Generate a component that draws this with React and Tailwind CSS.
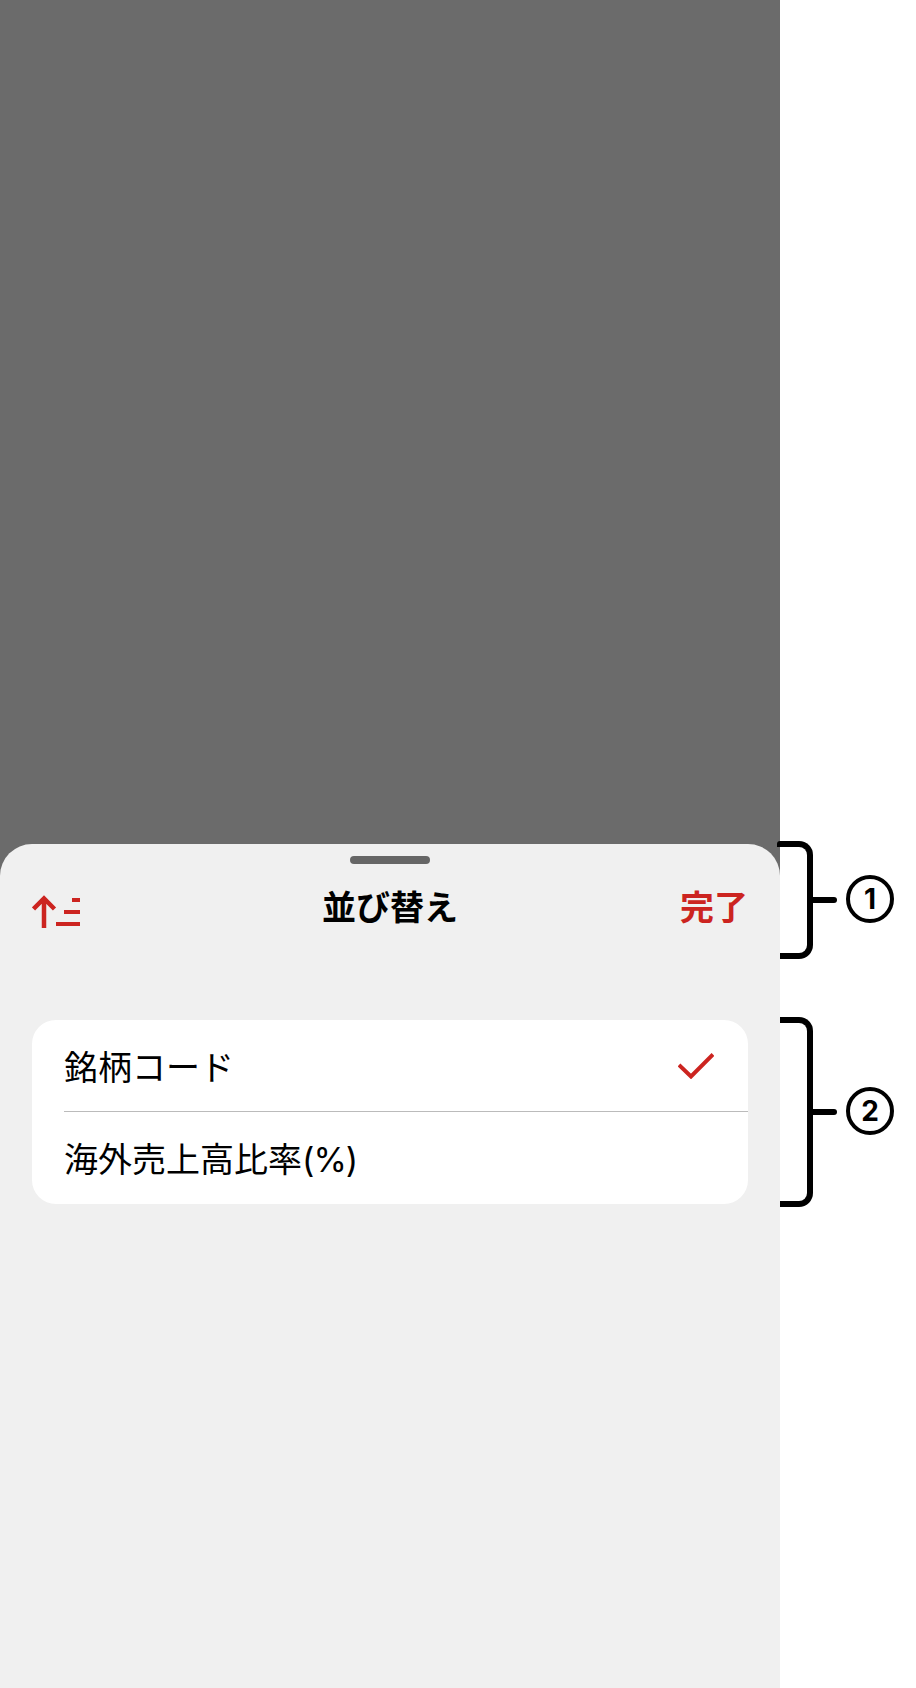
const FONT = "font-['Inter','Noto_Sans_CJK_JP',sans-serif]";

function SortIcon() {
  return (
    <svg width="48" height="33" viewBox="0 0 48 33" className="block">
      <path d="M12 33V3M1.500 14L12 3.500L22.500 14" fill="none" stroke="#cc2420" strokeWidth="4.500" />
      <rect x="40" y="3" width="8" height="4" fill="#cc2420" />
      <rect x="32" y="15" width="16" height="4" fill="#cc2420" />
      <rect x="24" y="27" width="24" height="4" fill="#cc2420" />
    </svg>
  );
}

function Check() {
  return (
    <svg width="36" height="26" viewBox="0 0 36 26" className="block">
      <path d="M1 12L13 23.500L35 1.500" fill="none" stroke="#cc2420" strokeWidth="4" />
    </svg>
  );
}

function Callout({ n, heightClass, marginClass }) {
  return (
    <div className={`flex items-center ${marginClass}`}>
      <div className={`w-[36px] ${heightClass} -ml-[3px] border-[6px] border-l-0 border-black rounded-r-[14px] rounded-l-[3px]`} />
      <div className="w-[25px] h-[6px] -ml-px bg-black rounded-r-full" />
      <div className="ml-[9px] mb-[2px] w-[48px] h-[48px] rounded-full border-[4px] border-black flex items-center justify-center text-[28px] leading-none font-bold text-black">
        {n}
      </div>
    </div>
  );
}

export default function App() {
  return (
    <div className={`w-[916px] h-[1688px] flex bg-white overflow-hidden ${FONT}`}>
      <div className="w-[780px] h-full flex flex-col bg-[#6b6b6b]">
        <div className="h-[844px]" />
        <div className="relative z-10 h-[844px] bg-[#f0f0f0] rounded-t-[32px] px-8 pt-3">
          <div className="mx-auto w-[80px] h-[8px] rounded-full bg-[#666666]" />
          <div className="h-[86px] grid grid-cols-[1fr_auto_1fr] items-center">
            <div className="mt-[9px]">
              <SortIcon />
            </div>
            <div className="pt-[2px] text-[34px] leading-[44px] font-bold text-black">並び替え</div>
            <div className="pt-[2px] text-[34px] leading-[44px] font-bold text-[#cc2420] text-right">完了</div>
          </div>
          <div className="mt-[70px] bg-white rounded-[24px] overflow-hidden">
            <div className="h-[91px] flex items-center justify-between pl-8 pr-[34px]">
              <div className="pt-1 text-[34px] leading-[44px] text-black">銘柄コード</div>
              <Check />
            </div>
            <div className="ml-8 h-px bg-[#bbbbbb]" />
            <div className="h-[92px] flex items-center pl-8">
              <div className="pt-1 text-[34px] leading-[44px] text-black">
                海外売上高比率<span className="tracking-[-1px]">(%)</span>
              </div>
            </div>
          </div>
        </div>
      </div>
      <div className="flex-1 flex flex-col">
        <Callout n="1" heightClass="h-[118px]" marginClass="mt-[841px]" />
        <Callout n="2" heightClass="h-[190px]" marginClass="mt-[58px]" />
      </div>
    </div>
  );
}
